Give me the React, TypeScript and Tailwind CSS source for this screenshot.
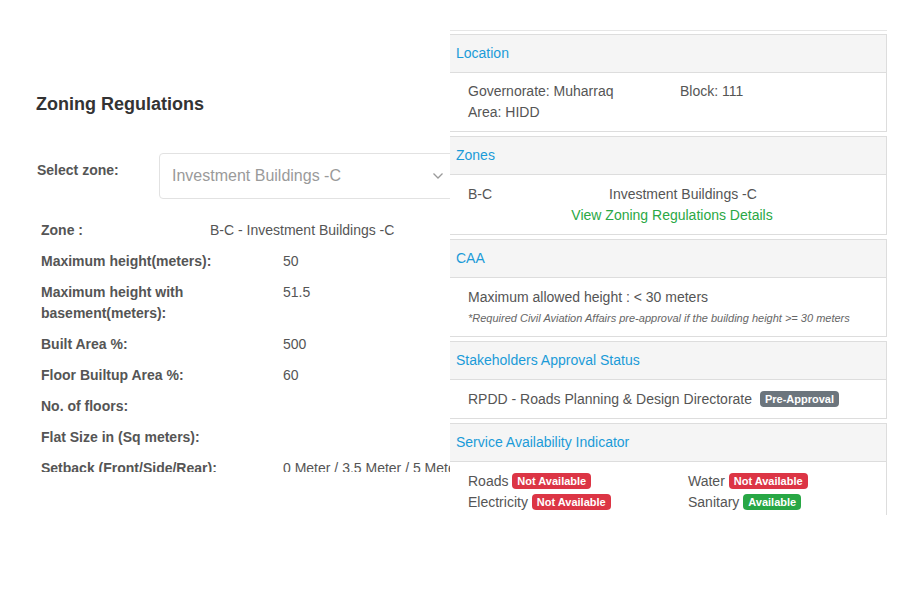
import React from "react";

const font = { fontFamily: '"Liberation Sans", Arial, sans-serif' };

function Row({ label, value, labelW = "w-[242px]" }: { label: string; value?: string; labelW?: string }) {
  return (
    <div className="flex py-[5px] text-[14px] leading-[21px]">
      <div className={`${labelW} shrink-0 pr-[24px] font-bold text-[#555]`}>{label}</div>
      <div className="whitespace-nowrap text-[#555]">{value}</div>
    </div>
  );
}

function Badge({ children, color, ml = "ml-0" }: { children: React.ReactNode; color: string; ml?: string }) {
  return (
    <span
      className={`${ml} inline-block rounded-[4px] px-[5px] align-[1px] text-[11px] font-bold leading-[16px] text-white ${color}`}
    >
      {children}
    </span>
  );
}

function Card({
  title,
  children,
  pad = "pt-[9px] pb-[7px]",
}: {
  title: string;
  children: React.ReactNode;
  pad?: string;
}) {
  return (
    <div className="mt-[4px] border border-l-0 border-[#dddddd] bg-white">
      <div className="border-b border-[#dddddd] bg-[#f5f5f5] px-[6px] py-[8px] text-[14px] leading-[21px] text-[#1b9bd8]">
        {title}
      </div>
      <div className={`px-[18px] ${pad} text-[14px] leading-[21px] text-[#555]`}>{children}</div>
    </div>
  );
}

export default function App() {
  return (
    <div className="relative h-[600px] w-[900px] overflow-hidden bg-white" style={font}>
      {/* Left: zoning regulations */}
      <div className="h-[472px] overflow-hidden">
        <div className="pl-[36px] pt-[94px] text-[18px] font-bold leading-[20px] text-[#333]">Zoning Regulations</div>
        <div className="mt-[39px] flex items-start pl-[37px]">
          <div className="w-[122px] shrink-0 pt-[7px] text-[14px] font-bold leading-[20px] text-[#555]">Select zone:</div>
          <div className="flex h-[46px] w-[300px] shrink-0 items-center justify-between rounded-[4px] border border-[#e2e2e2] pl-[12px] pr-[14px]">
            <span className="text-[16px] text-[#9a9a9a]">Investment Buildings -C</span>
            <svg width="12" height="8" viewBox="0 0 12 8" fill="none">
              <path d="M1.5 1.5 L6 6 L10.5 1.5" stroke="#9a9a9a" strokeWidth="1.3" />
            </svg>
          </div>
        </div>
        <div className="mt-[16px] pl-[41px]">
          <Row label="Zone :" value="B-C - Investment Buildings -C" labelW="w-[169px]" />
          <Row label="Maximum height(meters):" value="50" />
          <Row label="Maximum height with basement(meters):" value="51.5" />
          <Row label="Built Area %:" value="500" />
          <Row label="Floor Builtup Area %:" value="60" />
          <Row label="No. of floors:" />
          <Row label="Flat Size in (Sq meters):" />
          <Row label="Setback (Front/Side/Rear):" value="0 Meter / 3.5 Meter / 5 Meter" />
        </div>
      </div>

      {/* Right: overlay details panel */}
      <div className="absolute left-[450px] top-0 h-[515px] w-[437px] overflow-hidden bg-white">
        <div className="h-[31px] border-b border-[#e6e6e6]" />
        <div className="-mt-[1px]">
          <Card title="Location" pad="pt-[8px] pb-[8px]">
            <div className="grid grid-cols-[212px_1fr]">
              <div>Governorate: Muharraq</div>
              <div>Block: 111</div>
              <div>Area: HIDD</div>
            </div>
          </Card>
          <Card title="Zones" pad="pt-[9px] pb-[8px]">
            <div className="grid grid-cols-[141px_1fr]">
              <div>B-C</div>
              <div>Investment Buildings -C</div>
            </div>
            <div className="pl-[8px] text-center text-[#2aa845]">View Zoning Regulations Details</div>
          </Card>
          <Card title="CAA" pad="pt-[9px] pb-[7px]">
            <div>Maximum allowed height : &lt; 30 meters</div>
            <div className="text-[11px] italic leading-[21px] text-[#666]">
              *Required Civil Aviation Affairs pre-approval if the building height &gt;= 30 meters
            </div>
          </Card>
          <Card title="Stakeholders Approval Status" pad="pt-[9px] pb-[8px]">
            <div>
              RPDD - Roads Planning &amp; Design Directorate{" "}
              <Badge color="bg-[#6c757d]" ml="ml-[4px]">
                Pre-Approval
              </Badge>
            </div>
          </Card>
          <Card title="Service Availability Indicator" pad="pt-[9px] pb-[7px]">
            <div className="grid grid-cols-[220px_1fr]">
              <div>
                Roads <Badge color="bg-[#dc3545]">Not Available</Badge>
              </div>
              <div>
                Water <Badge color="bg-[#dc3545]">Not Available</Badge>
              </div>
              <div>
                Electricity <Badge color="bg-[#dc3545]">Not Available</Badge>
              </div>
              <div>
                Sanitary <Badge color="bg-[#28a745]">Available</Badge>
              </div>
            </div>
          </Card>
        </div>
      </div>
    </div>
  );
}
